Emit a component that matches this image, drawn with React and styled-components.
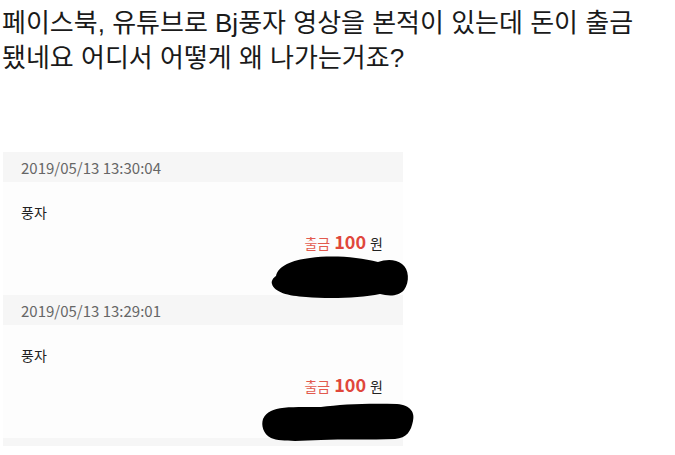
import React from 'react';
import styled, { createGlobalStyle } from 'styled-components';

const Global = createGlobalStyle`
  body {
    margin: 0;
    background: #ffffff;
  }
`

const Page = styled.div`
  width: 675px;
  height: 455px;
  overflow: hidden;
  background: #fff;
`

const Title = styled.h1`
  margin: 6px 0 0 0;
  padding-left: 2px;
  width: 660px;
  font-family: "Liberation Sans", "Noto Sans CJK KR", sans-serif;
  font-weight: normal;
  font-size: 26px;
  line-height: 35px;
  color: #1a1a1a;
`

const List = styled.div`
  margin: 76px 0 0 3px;
  width: 400px;
  font-family: "Noto Sans CJK KR", "Noto Sans", sans-serif;
`

const Head = styled.div`
  height: 30px;
  display: flex;
  align-items: center;
  padding-left: 18px;
  background: #f6f6f6;
  color: #666;
  font-size: 15px;
`

const Body = styled.div`
  position: relative;
  height: 113px;
  box-sizing: border-box;
  padding: 20px 20px 0 18px;
  background: #fdfdfd;
`

const Name = styled.div`
  font-size: 14px;
  line-height: 20px;
  color: #222;
`

const Amount = styled.div`
  margin-top: 7px;
  display: flex;
  justify-content: flex-end;
  align-items: baseline;
  gap: 4px;
  line-height: 24px;
  font-size: 14px;
  color: #e25a4e;
`

const Num = styled.span`
  font-size: 18px;
  font-weight: 700;
  color: #e0473b;
`

const Won = styled.span`
  color: #222;
  font-size: 14px;
`

const Blot = styled.svg`
  position: absolute;
  left: ${p => p.x}px;
  top: ${p => p.y}px;
`

const Strip = styled.div`
  height: 8px;
  background: #f6f6f6;
`

const items = [
  { date: '2019/05/13 13:30:04', name: '풍자', amount: 100, blot: 1 },
  { date: '2019/05/13 13:29:01', name: '풍자', amount: 100, blot: 2 },
]

function Scribble({ kind }) {
  if (kind === 1) {
    return (
      <Blot x={267} y={72} width="140" height="45" viewBox="0 0 140 45">
        <path
          d="M6 22 C8 12 22 6 40 4 C62 1 88 3 108 8 C116 5 126 5 132 10 C139 15 140 28 134 36 C128 43 118 42 110 40 C90 44 60 45 36 43 C18 42 4 38 2 30 C1 27 3 24 6 22 Z"
          fill="#000"
        />
      </Blot>
    )
  }
  return (
    <Blot x={258} y={78} width="154" height="40" viewBox="0 0 154 40">
      <path
        d="M10 8 C18 3 40 4 60 4 C80 1 110 0 136 1 C150 2 154 10 152 18 C150 28 146 35 134 36 C110 37 80 36 60 37 C40 38 20 39 10 35 C2 31 0 22 2 16 C4 12 6 10 10 8 Z"
        fill="#000"
      />
    </Blot>
  )
}

export default function App() {
  return (
    <Page>
      <Global />
      <Title>페이스북, 유튜브로 Bj풍자 영상을 본적이 있는데 돈이 출금 됐네요 어디서 어떻게 왜 나가는거죠?</Title>
      <List>
        {items.map((it, i) => (
          <React.Fragment key={i}>
            <Head>{it.date}</Head>
            <Body>
              <Name>{it.name}</Name>
              <Amount>
                <span>출금</span>
                <Num>{it.amount}</Num>
                <Won>원</Won>
              </Amount>
              <Scribble kind={it.blot} />
            </Body>
          </React.Fragment>
        ))}
        <Strip />
      </List>
    </Page>
  )
}
